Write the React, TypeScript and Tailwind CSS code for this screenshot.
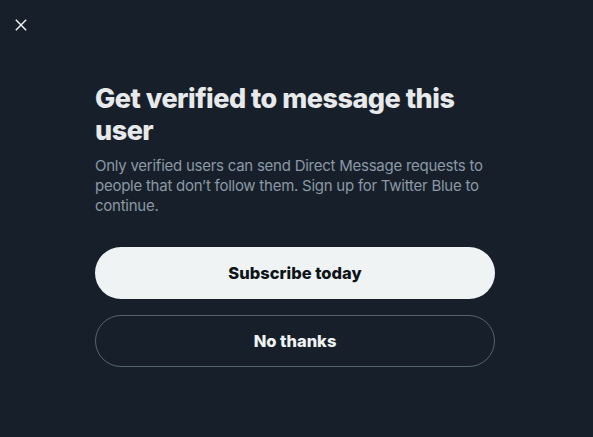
export default function App() {
  return (
    <div className="w-[593px] h-[437px] bg-[#17202a] relative overflow-hidden" style={{ fontFamily: "Inter, 'Noto Sans', sans-serif" }}>
      <div className="absolute left-[13px] top-[17px] w-[16px] h-[16px] flex items-center justify-center">
        <svg width="16" height="16" viewBox="0 0 24 24" fill="none" stroke="#eff3f4" strokeWidth="2.2" strokeLinecap="square">
          <path d="M5 5L19 19M19 5L5 19" />
        </svg>
      </div>
      <div className="flex flex-col pl-[95px] pt-[83px] w-[495px]">
        <h1 className="text-[27px] leading-[32px] font-extrabold text-[#e7e9ea] tracking-[-0.5px]">Get verified to message this user</h1>
        <p className="mt-[9px] text-[15px] leading-[20px] text-[#8b98a5] tracking-[-0.25px]">Only verified users can send Direct Message requests to people that don’t follow them. Sign up for Twitter Blue to continue.</p>
        <button className="mt-[31px] h-[52px] w-[400px] rounded-full bg-[#eff3f4] text-[#0f1419] text-[16.5px] font-extrabold">Subscribe today</button>
        <button className="mt-[16px] h-[52px] w-[400px] rounded-full border border-[#536471] text-[#eff3f4] text-[16.5px] font-extrabold">No thanks</button>
      </div>
    </div>
  );
}
